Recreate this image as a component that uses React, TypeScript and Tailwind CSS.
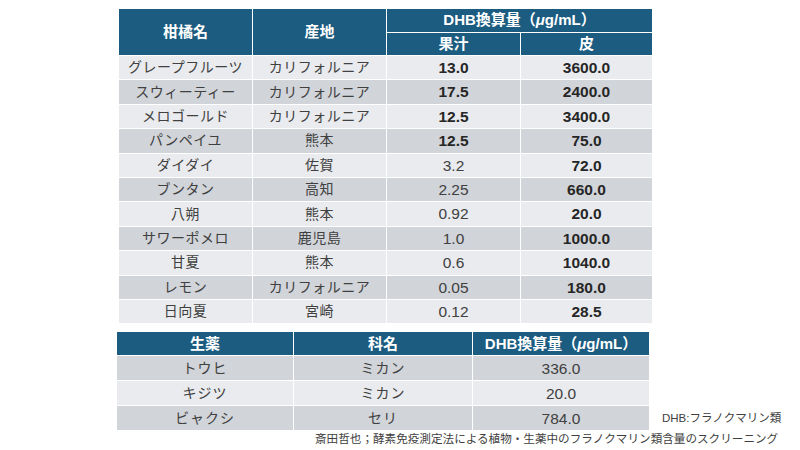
const font = '[font-family:"Liberation_Sans","Noto_Sans_CJK_JP",sans-serif]';

type Row = { name: string; origin: string; juice: string; juiceBold: boolean; peel: string };

const citrus: Row[] = [
  { name: 'グレープフルーツ', origin: 'カリフォルニア', juice: '13.0', juiceBold: true, peel: '3600.0' },
  { name: 'スウィーティー', origin: 'カリフォルニア', juice: '17.5', juiceBold: true, peel: '2400.0' },
  { name: 'メロゴールド', origin: 'カリフォルニア', juice: '12.5', juiceBold: true, peel: '3400.0' },
  { name: 'パンペイユ', origin: '熊本', juice: '12.5', juiceBold: true, peel: '75.0' },
  { name: 'ダイダイ', origin: '佐賀', juice: '3.2', juiceBold: false, peel: '72.0' },
  { name: 'ブンタン', origin: '高知', juice: '2.25', juiceBold: false, peel: '660.0' },
  { name: '八朔', origin: '熊本', juice: '0.92', juiceBold: false, peel: '20.0' },
  { name: 'サワーポメロ', origin: '鹿児島', juice: '1.0', juiceBold: false, peel: '1000.0' },
  { name: '甘夏', origin: '熊本', juice: '0.6', juiceBold: false, peel: '1040.0' },
  { name: 'レモン', origin: 'カリフォルニア', juice: '0.05', juiceBold: false, peel: '180.0' },
  { name: '日向夏', origin: '宮崎', juice: '0.12', juiceBold: false, peel: '28.5' },
];

const crude = [
  { name: 'トウヒ', family: 'ミカン', value: '336.0' },
  { name: 'キジツ', family: 'ミカン', value: '20.0' },
  { name: 'ビャクシ', family: 'セリ', value: '784.0' },
];

export default function App() {
  return (
    <div className={`w-[800px] h-[450px] bg-white overflow-hidden pt-[9px] ${font}`}>
      {/* Citrus table */}
      <div className="ml-[119px] w-[533px] grid grid-cols-[133px_133px_133px_131px] gap-px bg-white">
        <div className="row-span-2 bg-[#1b5c80] text-white font-bold text-[15px] flex items-center justify-center">柑橘名</div>
        <div className="row-span-2 bg-[#1b5c80] text-white font-bold text-[15px] flex items-center justify-center">産地</div>
        <div className="col-span-2 h-[23px] bg-[#1b5c80] text-white font-bold text-[15px] flex items-center justify-center">
          DHB換算量（<span className="italic">μ</span>g/mL）
        </div>
        <div className="h-[22px] bg-[#1b5c80] text-white font-bold text-[15px] flex items-center justify-center">果汁</div>
        <div className="h-[22px] bg-[#1b5c80] text-white font-bold text-[15px] flex items-center justify-center">皮</div>

        {citrus.map((r, i) => {
          const bg = i % 2 === 0 ? 'bg-[#e9ebee]' : 'bg-[#d1d4d9]';
          return (
            <div key={r.name} className="contents">
              <div className={`${bg} h-[23.4px] flex items-center justify-center text-[14px] text-[#404040] tracking-[0.5px]`}>{r.name}</div>
              <div className={`${bg} h-[23.4px] flex items-center justify-center text-[14px] text-[#404040] tracking-[0.5px]`}>{r.origin}</div>
              <div className={`${bg} h-[23.4px] flex items-center justify-center text-[15.5px] ${r.juiceBold ? 'font-bold text-[#262626]' : 'text-[#404040]'}`}>{r.juice}</div>
              <div className={`${bg} h-[23.4px] flex items-center justify-center text-[15.5px] font-bold text-[#262626]`}>{r.peel}</div>
            </div>
          );
        })}
      </div>

      {/* Crude drug table + note */}
      <div className="flex items-end mt-[9px] ml-[117px]">
        <div className="w-[532px] grid grid-cols-[176px_178px_176px] gap-px bg-white">
          <div className="h-[23px] bg-[#1b5c80] text-white font-bold text-[15px] flex items-center justify-center">生薬</div>
          <div className="h-[23px] bg-[#1b5c80] text-white font-bold text-[15px] flex items-center justify-center">科名</div>
          <div className="h-[23px] bg-[#1b5c80] text-white font-bold text-[15px] flex items-center justify-center">
            DHB換算量（<span className="italic">μ</span>g/mL）
          </div>
          {crude.map((r, i) => {
            const bg = i % 2 === 0 ? 'bg-[#d1d4d9]' : 'bg-[#e9ebee]';
            return (
              <div key={r.name} className="contents">
                <div className={`${bg} h-[24px] flex items-center justify-center text-[14px] text-[#404040] tracking-[1px]`}>{r.name}</div>
                <div className={`${bg} h-[24px] flex items-center justify-center text-[14px] text-[#404040] tracking-[1px]`}>{r.family}</div>
                <div className={`${bg} h-[24px] flex items-center justify-center text-[15.5px] text-[#404040]`}>{r.value}</div>
              </div>
            );
          })}
        </div>
        <div className="ml-[13px] mb-[6px] text-[11.5px] text-[#404040] leading-none">DHB:フラノクマリン類</div>
      </div>

      <div className="mt-[2px] ml-[315px] text-[11.6px] text-[#404040] leading-[14px] whitespace-nowrap">
        斎田哲也；酵素免疫測定法による植物・生薬中のフラノクマリン類含量のスクリーニング
      </div>
    </div>
  );
}
